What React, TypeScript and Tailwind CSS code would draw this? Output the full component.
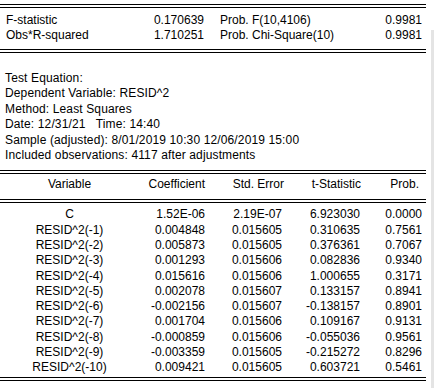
const stats = [
  { label: 'F-statistic', value: '0.170639', probLabel: 'Prob. F(10,4106)', prob: '0.9981' },
  { label: 'Obs*R-squared', value: '1.710251', probLabel: 'Prob. Chi-Square(10)', prob: '0.9981' },
];

const info = [
  'Test Equation:',
  'Dependent Variable: RESID^2',
  'Method: Least Squares',
  'Date: 12/31/21   Time: 14:40',
  'Sample (adjusted): 8/01/2019 10:30 12/06/2019 15:00',
  'Included observations: 4117 after adjustments',
];

const rows = [
  ['C', '1.52E-06', '2.19E-07', '6.923030', '0.0000'],
  ['RESID^2(-1)', '0.004848', '0.015605', '0.310635', '0.7561'],
  ['RESID^2(-2)', '0.005873', '0.015605', '0.376361', '0.7067'],
  ['RESID^2(-3)', '0.001293', '0.015606', '0.082836', '0.9340'],
  ['RESID^2(-4)', '0.015616', '0.015606', '1.000655', '0.3171'],
  ['RESID^2(-5)', '0.002078', '0.015607', '0.133157', '0.8941'],
  ['RESID^2(-6)', '-0.002156', '0.015607', '-0.138157', '0.8901'],
  ['RESID^2(-7)', '0.001704', '0.015606', '0.109167', '0.9131'],
  ['RESID^2(-8)', '-0.000859', '0.015606', '-0.055036', '0.9561'],
  ['RESID^2(-9)', '-0.003359', '0.015605', '-0.215272', '0.8296'],
  ['RESID^2(-10)', '0.009421', '0.015605', '0.603721', '0.5461'],
];

function DoubleRule() {
  return <div className="h-[4px] border-t border-b border-black" />;
}

const cols = 'grid grid-cols-[139px_68px_79px_77px_62px]';

export default function App() {
  return (
    <div
      className="relative w-[434px] h-[388px] bg-white text-black text-[12px] overflow-hidden"
      style={{ fontFamily: '"Liberation Sans", Arial, sans-serif' }}
    >
      <div className="w-[426px] pt-[4px]">
        <DoubleRule />
        <div className="pt-[5px] pb-[6px]">
          {stats.map((s) => (
            <div key={s.label} className="grid grid-cols-[206px_220px] h-[15px] leading-[15px]">
              <div className="flex justify-between pl-[6px] pr-[2px]">
                <span>{s.label}</span>
                <span>{s.value}</span>
              </div>
              <div className="flex justify-between pl-[14px] pr-[4px]">
                <span>{s.probLabel}</span>
                <span>{s.prob}</span>
              </div>
            </div>
          ))}
        </div>
        <DoubleRule />

        <div className="pt-[18px] pb-[7px] pl-[5px] tracking-[0.13px]">
          {info.map((line) => (
            <div key={line} className="h-[15.4px] leading-[15.4px] whitespace-pre">
              {line}
            </div>
          ))}
        </div>
        <DoubleRule />

        <div className={`${cols} pt-[3px] pb-[6px] h-[25px] leading-[15.4px]`}>
          <div className="text-center">Variable</div>
          <div className="text-right pr-[2px]">Coefficient</div>
          <div className="text-right pr-[2px]">Std. Error</div>
          <div className="text-right pr-[2px]">t-Statistic</div>
          <div className="text-right pr-[6px]">Prob.</div>
        </div>
        <DoubleRule />

        <div className="pt-[4px] pb-[1px]">
          {rows.map((r) => (
            <div key={r[0]} className={`${cols} h-[15.3px] leading-[15.3px]`}>
              <div className="text-center">{r[0]}</div>
              <div className="text-right pr-[2px]">{r[1]}</div>
              <div className="text-right pr-[4px]">{r[2]}</div>
              <div className="text-right pr-[3px]">{r[3]}</div>
              <div className="text-right pr-[3px]">{r[4]}</div>
            </div>
          ))}
        </div>
        <DoubleRule />
      </div>
      <div className="absolute right-0 top-[30px] bottom-0 w-[3px] bg-[#e4e4e4]" />
    </div>
  );
}
